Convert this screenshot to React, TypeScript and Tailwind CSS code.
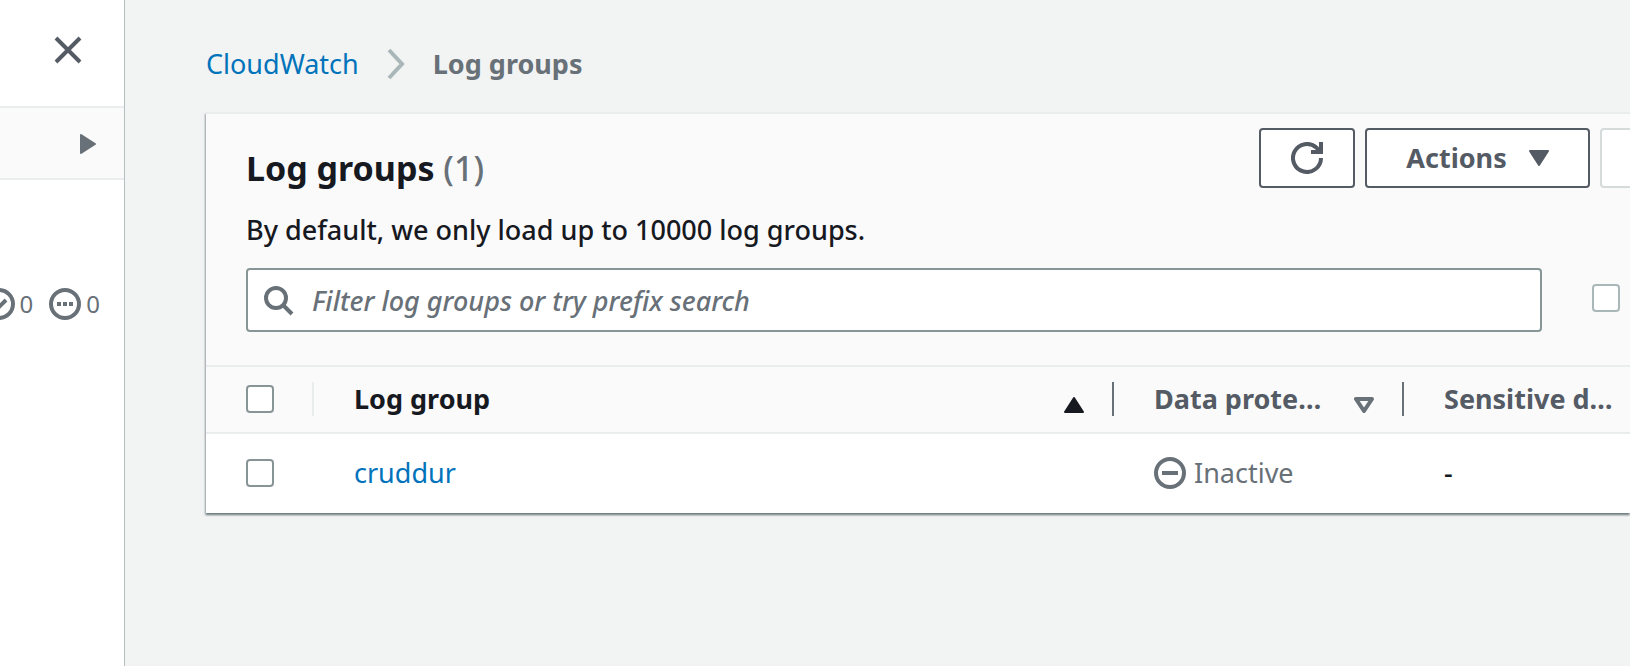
import React from "react";

function CheckBox({ label, muted = false }: { label: string; muted?: boolean }) {
  return (
    <input
      type="checkbox"
      aria-label={label}
      className={
        "block h-7 w-7 shrink-0 appearance-none rounded border-2 bg-white checked:bg-[#0073bb] " +
        (muted ? "border-[#aab7b8]" : "border-[#879596]")
      }
    />
  );
}

function Sidebar() {
  return (
    <aside className="w-[125px] shrink-0 overflow-hidden border-r border-[#b6bfbf] bg-white text-[#687078]">
      <div className="flex h-[108px] items-start justify-end border-b-2 border-[#eaeded] pt-9 pr-[42px]">
        <button type="button" aria-label="Close navigation" className="text-[#545b64]">
          <svg width="28" height="28" viewBox="0 0 28 28" fill="none" stroke="currentColor" strokeWidth="4">
            <path d="M2 2l24 24M26 2L2 26" />
          </svg>
        </button>
      </div>
      <div className="flex h-[72px] items-center justify-end border-b-2 border-[#eaeded] bg-[#fafafa] pt-0.5 pr-7">
        <button type="button" aria-label="Expand section">
          <svg width="16" height="20" viewBox="0 0 16 20" fill="currentColor" stroke="currentColor" strokeWidth="2" strokeLinejoin="round">
            <path d="M1 1v18L15 10z" />
          </svg>
        </button>
      </div>
      <div className="mt-[108px] flex items-center justify-end gap-4 pr-6 text-2xl leading-8">
        <span className="flex items-center gap-[5px]">
          <svg width="32" height="32" viewBox="0 0 32 32" fill="none" stroke="currentColor" strokeWidth="4">
            <circle cx="16" cy="16" r="14" />
            <path d="M9 16l5 5 9-9" />
          </svg>
          0
        </span>
        <span className="flex items-center gap-[5px]">
          <svg width="32" height="32" viewBox="0 0 32 32" fill="none" stroke="currentColor" strokeWidth="4">
            <circle cx="16" cy="16" r="14" />
            <path d="M8 16h4M14 16h4M20 16h4" />
          </svg>
          0
        </span>
      </div>
    </aside>
  );
}

function Breadcrumbs() {
  return (
    <nav aria-label="Breadcrumbs" className="flex h-10 items-center text-[27px]">
      <a href="#cloudwatch" className="text-[#0073bb]">CloudWatch</a>
      <svg className="mx-7" width="18" height="32" viewBox="0 0 18 32" fill="none" stroke="#aab7b8" strokeWidth="4">
        <path d="M2 2l13 14L2 30" />
      </svg>
      <span className="font-bold text-[#687078]">Log groups</span>
    </nav>
  );
}

function CardHeader() {
  return (
    <header className="bg-[#fafafa] pt-[14px] pb-[33px] pl-10">
      <div className="flex items-start gap-[10px]">
        <h1 className="mt-4 flex-1 text-[34px] leading-12 font-bold text-[#16191f]">
          Log groups <span className="font-medium text-[#687078]">(1)</span>
        </h1>
        <button
          type="button"
          aria-label="Refresh"
          className="flex h-[60px] w-24 items-center justify-center rounded border-2 border-[#545b64] bg-white text-[#545b64]"
        >
          <svg width="32" height="32" viewBox="0 0 32 32" fill="none" stroke="currentColor" strokeWidth="4">
            <path d="M30 16a14 14 0 1 1-4.5-10.3L29 9.5" />
            <path d="M20 10h10V0" />
          </svg>
        </button>
        <button
          type="button"
          className="flex h-[60px] w-[225px] items-center justify-center gap-[22px] rounded border-2 border-[#545b64] bg-white text-[27px] font-bold text-[#545b64]"
        >
          Actions
          <svg width="20" height="16" viewBox="0 0 20 16" fill="currentColor" stroke="currentColor" strokeWidth="2" strokeLinejoin="round">
            <path d="M1 1h18L10 15z" />
          </svg>
        </button>
        <button
          type="button"
          disabled
          aria-label="View in Logs Insights"
          className="h-[60px] w-[30px] rounded-l border-2 border-r-0 border-[#d5dbdb] bg-white"
        />
      </div>
      <p className="mt-5 text-[27px] leading-9 font-medium text-[#16191f]">By default, we only load up to 10000 log groups.</p>
      <div className="mt-5 flex items-start gap-[50px] pr-[10px]">
        <label className="flex h-16 flex-1 items-center gap-4 rounded border-2 border-[#879596] bg-white pl-4">
          <svg width="32" height="32" viewBox="0 0 32 32" fill="none" stroke="#687078" strokeWidth="4">
            <circle cx="12" cy="14" r="10" />
            <path d="M19 21l9 9" />
          </svg>
          <input
            type="text"
            aria-label="Filter log groups"
            placeholder="Filter log groups or try prefix search"
            className="h-full flex-1 text-[27px] font-medium outline-none placeholder:text-[#687078] placeholder:italic placeholder:opacity-100"
          />
        </label>
        <div className="pt-4">
          <CheckBox label="Exact match" muted />
        </div>
      </div>
    </header>
  );
}

function LogGroupTable() {
  return (
    <table className="w-full table-fixed text-left text-[27px] leading-9">
      <colgroup>
        <col className="w-[108px]" />
        <col />
        <col className="w-[290px]" />
        <col className="w-[226px]" />
      </colgroup>
      <thead className="border-y-2 border-[#eaeded] bg-[#fafafa] text-[#545b64]">
        <tr className="h-[67px]">
          <th className="p-0 pb-0.5">
            <div className="flex h-[34px] items-center border-r-2 border-[#eaeded] pl-10">
              <CheckBox label="Select all log groups" />
            </div>
          </th>
          <th className="p-0 pb-0.5">
            <div className="flex h-[34px] items-center justify-between border-r-2 border-[#687078] pr-7 pl-10 text-[#16191f]">
              Log group
              <svg className="mt-3" width="20" height="16" viewBox="0 0 20 16" fill="currentColor" stroke="currentColor" strokeWidth="2" strokeLinejoin="round">
                <path d="M1 15h18L10 1z" />
              </svg>
            </div>
          </th>
          <th className="p-0 pb-0.5">
            <div className="flex h-[34px] items-center justify-between border-r-2 border-[#687078] pr-7 pl-10 whitespace-nowrap">
              Data prote…
              <svg className="mt-3" width="20" height="16" viewBox="0 0 20 16" fill="none" stroke="#687078" strokeWidth="4" strokeLinejoin="round">
                <path d="M2 2h16L10 14z" />
              </svg>
            </div>
          </th>
          <th className="p-0 pb-0.5 pl-10 whitespace-nowrap">Sensitive d…</th>
        </tr>
      </thead>
      <tbody className="bg-white">
        <tr className="h-[80px]">
          <td className="p-0 pb-0.5 pl-10">
            <CheckBox label="Select cruddur" />
          </td>
          <td className="p-0 pb-0.5 pl-10">
            <a href="#cruddur" className="text-[#0073bb]">cruddur</a>
          </td>
          <td className="p-0 pb-0.5 pl-10">
            <span className="flex items-center gap-2 text-[#687078]">
              <svg width="32" height="32" viewBox="0 0 32 32" fill="none" stroke="currentColor" strokeWidth="4">
                <circle cx="16" cy="16" r="14" />
                <path d="M8 16h16" />
              </svg>
              Inactive
            </span>
          </td>
          <td className="p-0 pb-0.5 pl-10 font-medium text-[#16191f]">-</td>
        </tr>
      </tbody>
    </table>
  );
}

export default function App() {
  return (
    <div className="flex min-h-screen overflow-hidden bg-[#f2f3f3] font-['Noto_Sans',sans-serif]">
      <Sidebar />
      <main className="min-w-0 flex-1 pt-11 pl-[81px]">
        <Breadcrumbs />
        <section className="mt-7 border-t-2 border-[#eaeded] bg-white shadow-[0_2px_2px_0_rgba(0,28,36,0.4),-1px_2px_2px_0_rgba(0,28,36,0.25)]">
          <CardHeader />
          <LogGroupTable />
        </section>
      </main>
    </div>
  );
}
